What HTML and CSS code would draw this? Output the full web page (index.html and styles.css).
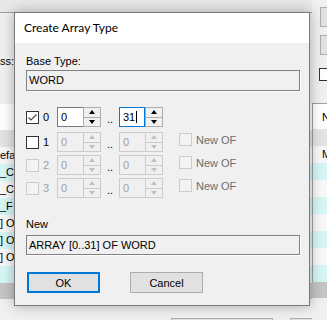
FILE: index.html
```html
<!DOCTYPE html>
<html lang="en">
<head>
    <meta charset="UTF-8">
    <meta name="viewport" content="width=device-width, initial-scale=1.0">
    <title>Create Array Type</title>
    <link rel="stylesheet" href="styles.css">
</head>
<body>
    <div class="app">
        <div class="pane-left">
            <div class="toolbar"></div>
            <div class="props">
                <div class="addr">ss:</div>
            </div>
            <div class="table">
                <div class="thead"></div>
                <div class="tfilter"></div>
                <div class="trow">efa</div>
                <div class="trow alt">_C</div>
                <div class="trow">_C</div>
                <div class="trow alt">_F</div>
                <div class="trow">] O</div>
                <div class="trow alt">] O</div>
                <div class="trow">] O</div>
                <div class="trow alt"></div>
            </div>
            <div class="hscroll"></div>
            <div class="footer">
                <div class="fbtn wide"></div>
                <div class="fbtn"></div>
            </div>
        </div>
        <div class="pane-right">
            <div class="rbtn"></div>
            <div class="rbtn second"></div>
            <div class="rcheck"></div>
            <div class="table right">
                <div class="thead">N</div>
                <div class="tfilter"></div>
                <div class="trow">M</div>
                <div class="trow alt"></div>
                <div class="trow"></div>
                <div class="trow alt"></div>
                <div class="trow"></div>
                <div class="trow alt"></div>
                <div class="trow"></div>
                <div class="trow alt"></div>
            </div>
            <div class="hscroll"></div>
        </div>
    </div>

    <div class="dialog">
        <div class="dlg-title">Create Array Type</div>
        <div class="dlg-body">
            <div class="lbl">Base Type:</div>
            <div class="field">WORD</div>

            <div class="dim first">
                <span class="cb">
                    <svg width="11" height="11" viewBox="0 0 11 11"><path d="M1.5 5.5 L4 8 L9.5 2.5" fill="none" stroke="#4a4a4a" stroke-width="1.2"/></svg>
                </span>
                <span class="idx">0</span>
                <div class="spin">
                    <div class="edit">0</div>
                    <div class="btns"><span class="up"></span><span class="dn"></span></div>
                </div>
                <span class="dots">..</span>
                <div class="spin">
                    <div class="edit focus">31<i class="caret"></i></div>
                    <div class="btns"><span class="up"></span><span class="dn"></span></div>
                </div>
            </div>

            <div class="dim second">
                <span class="cb"></span>
                <span class="idx">1</span>
                <div class="spin off">
                    <div class="edit">0</div>
                    <div class="btns"><span class="up"></span><span class="dn"></span></div>
                </div>
                <span class="dots">..</span>
                <div class="spin off">
                    <div class="edit">0</div>
                    <div class="btns"><span class="up"></span><span class="dn"></span></div>
                </div>
                <div class="newof"><span class="cb off"></span>New OF</div>
            </div>

            <div class="dim">
                <span class="cb off"></span>
                <span class="idx off">2</span>
                <div class="spin off">
                    <div class="edit">0</div>
                    <div class="btns"><span class="up"></span><span class="dn"></span></div>
                </div>
                <span class="dots">..</span>
                <div class="spin off">
                    <div class="edit">0</div>
                    <div class="btns"><span class="up"></span><span class="dn"></span></div>
                </div>
                <div class="newof"><span class="cb off"></span>New OF</div>
            </div>

            <div class="dim">
                <span class="cb off"></span>
                <span class="idx off">3</span>
                <div class="spin off">
                    <div class="edit">0</div>
                    <div class="btns"><span class="up"></span><span class="dn"></span></div>
                </div>
                <span class="dots">..</span>
                <div class="spin off">
                    <div class="edit">0</div>
                    <div class="btns"><span class="up"></span><span class="dn"></span></div>
                </div>
                <div class="newof"><span class="cb off"></span>New OF</div>
            </div>

            <div class="lbl new">New</div>
            <div class="field short">ARRAY [0..31] OF WORD</div>

            <div class="buttons">
                <button class="btn default">OK</button>
                <button class="btn">Cancel</button>
            </div>
        </div>
    </div>
</body>
</html>
```

FILE: styles.css
```css
body {
    margin: 0;
    width: 327px;
    height: 320px;
    overflow: hidden;
    background: #f0f0f0;
    color: #000;
    font-family: "Liberation Sans", Arial, sans-serif;
    font-size: 11px;
}

/* background application window */
.app {
    display: flex;
    height: 320px;
}

.pane-left {
    width: 312px;
    display: flex;
    flex-direction: column;
}

.pane-right {
    flex: 1;
    display: flex;
    flex-direction: column;
    overflow: hidden;
}

.pane-left > div,
.pane-right > div {
    flex-shrink: 0;
}

.toolbar {
    height: 12px;
    background: #e8e8e8;
    border-bottom: 1px solid #a0a0a0;
}

.props {
    height: 91px;
}

.addr {
    margin-top: 42px;
    line-height: 13px;
}

.table {
    display: flex;
    flex-direction: column;
}

.thead {
    height: 26px;
    background: #fff;
    line-height: 26px;
}

.tfilter {
    height: 17px;
    background: #e3e3e3;
}

.trow {
    height: 17px;
    line-height: 17px;
    background: #f7f7f7;
    white-space: nowrap;
    overflow: hidden;
}

.trow.alt {
    background: #d6f5f5;
}

.table.right {
    border-left: 1px solid #a0a0a0;
    border-top: 1px solid #a0a0a0;
    margin-top: 22px;
}

.table.right .thead {
    height: 25px;
    padding-left: 9px;
}

.table.right .trow {
    padding-left: 9px;
}

.hscroll {
    height: 16px;
    background: #c4c4c4;
}

.footer {
    display: flex;
    height: 21px;
    overflow: hidden;
    padding-top: 19px;
    box-sizing: border-box;
    padding-left: 171px;
    gap: 17px;
}

.fbtn {
    width: 40px;
    height: 20px;
    flex-shrink: 0;
    background: #e1e1e1;
    border: 1px solid #adadad;
}

.fbtn.wide {
    width: 100px;
}

.rbtn {
    width: 30px;
    height: 20px;
    margin: 7px 0 0 8px;
    background: #e1e1e1;
    border: 1px solid #adadad;
    box-sizing: border-box;
}

.rbtn.second {
    margin-top: 8px;
}

.rcheck {
    width: 13px;
    height: 13px;
    margin: 13px 0 0 7px;
    box-sizing: border-box;
    border: 1px solid #333;
    background: #fff;
}

/* dialog */
.dialog {
    position: absolute;
    left: 14px;
    top: 12px;
    width: 296px;
    height: 294px;
    box-sizing: border-box;
    border: 1px solid #7a7a7a;
    background: #f0f0f0;
    box-shadow: 0 0 12px rgba(0, 0, 0, 0.3);
}

.dlg-title {
    height: 30px;
    line-height: 30px;
    padding-left: 9px;
    background: #fff;
    font-family: Lato, "Noto Sans", sans-serif;
    font-size: 12px;
    color: #000;
}

.dlg-body {
    padding: 0 9px 0 11px;
}

.lbl {
    margin-top: 12px;
    line-height: 13px;
}

.lbl.new {
    margin-top: 20px;
}

.field {
    margin-top: 2px;
    height: 21px;
    line-height: 19px;
    box-sizing: border-box;
    border: 1px solid #828282;
    box-shadow: 1px 1px 0 #fff;
    padding-left: 2px;
}

.field.short {
    margin-top: 4px;
    height: 20px;
    line-height: 18px;
}

.dim {
    display: flex;
    align-items: center;
    height: 20px;
    margin-top: 3px;
}

.dim.first {
    margin-top: 16px;
}

.dim.second {
    margin-top: 5px;
}

.cb {
    width: 13px;
    height: 13px;
    box-sizing: border-box;
    border: 1px solid #333;
    background: #fff;
    flex-shrink: 0;
    display: flex;
}

.cb.off {
    border-color: #cccccc;
    background: #f3f3f3;
}

.idx {
    width: 14px;
    margin-left: 4px;
}

.idx.off {
    color: #a0a0a0;
}

.spin {
    display: flex;
    width: 44px;
    height: 20px;
}

.edit {
    width: 26px;
    box-sizing: border-box;
    border: 1px solid #7a7a7a;
    border-right: none;
    background: #fff;
    padding-left: 3px;
    line-height: 18px;
    display: flex;
    align-items: center;
}

.edit.focus {
    border: 1px solid #0078d7;
}

.caret {
    width: 1px;
    height: 12px;
    margin-left: 1px;
    background: #000;
}

.btns {
    width: 18px;
    box-sizing: border-box;
    border: 1px solid #adadad;
    background: #f0f0f0;
    display: flex;
    flex-direction: column;
}

.up,
.dn {
    flex: 1;
    display: flex;
    align-items: center;
    justify-content: center;
}

.up {
    border-bottom: 1px solid #adadad;
}

.up::after {
    content: "";
    border-left: 3px solid transparent;
    border-right: 3px solid transparent;
    border-bottom: 4px solid #000;
}

.dn::after {
    content: "";
    border-left: 3px solid transparent;
    border-right: 3px solid transparent;
    border-top: 4px solid #000;
}

.spin.off .edit {
    background: #f0f0f0;
    border-color: #cccccc;
    color: #a0a0a0;
}

.spin.off .btns,
.spin.off .up {
    border-color: #cccccc;
}

.spin.off .up::after {
    border-bottom-color: #bfbfbf;
}

.spin.off .dn::after {
    border-top-color: #bfbfbf;
}

.dots {
    width: 12px;
    padding-left: 6px;
    align-self: flex-end;
    line-height: 13px;
    margin-bottom: 1px;
}

.newof {
    display: flex;
    align-items: center;
    gap: 4px;
    margin-left: 16px;
    align-self: flex-start;
    margin-top: 1px;
    color: #6d6d6d;
    white-space: nowrap;
}

.buttons {
    display: flex;
    margin-top: 17px;
    padding-left: 1px;
    gap: 30px;
}

.btn {
    width: 73px;
    height: 21px;
    box-sizing: border-box;
    border: 1px solid #adadad;
    background: #e1e1e1;
    font-family: "Liberation Sans", Arial, sans-serif;
    font-size: 11px;
    color: #000;
    padding: 0;
}

.btn.default {
    border: 2px solid #0078d7;
}
```
